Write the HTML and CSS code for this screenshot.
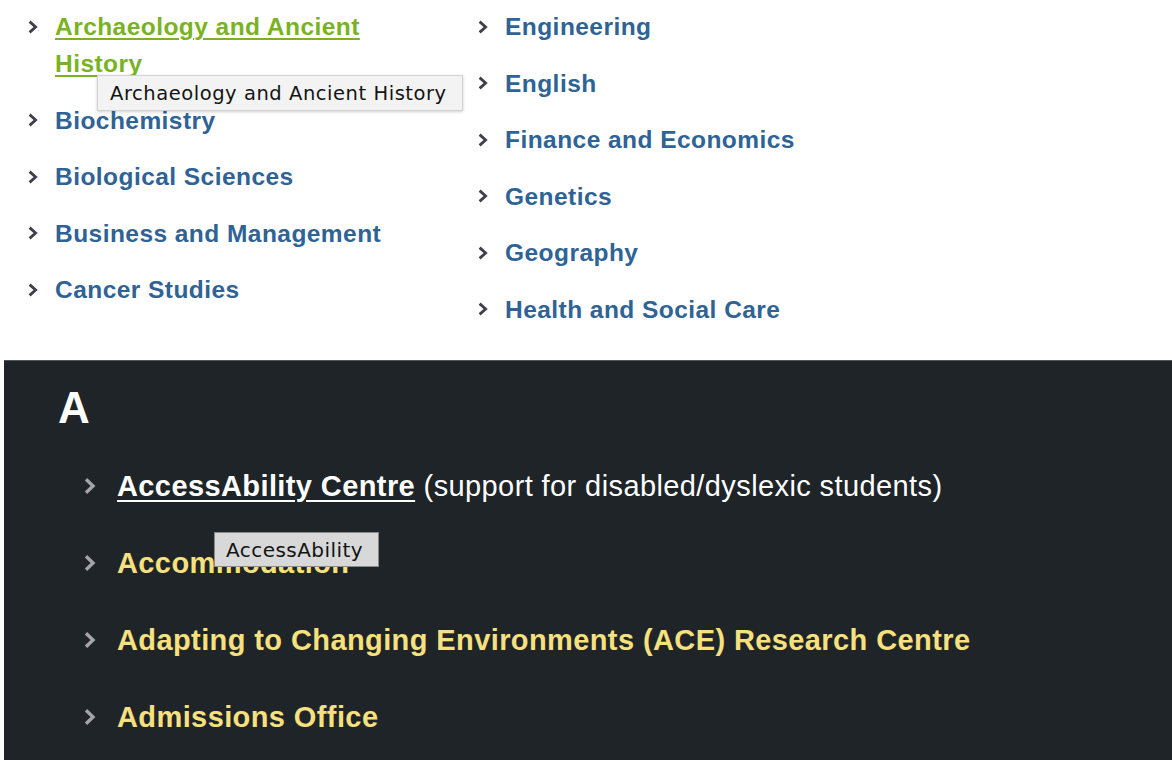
FILE: index.html
```html
<!DOCTYPE html>
<html lang="en">
<head>
<meta charset="utf-8">
<title>Subjects and services</title>
<link rel="stylesheet" href="styles.css">
</head>
<body>
<section class="subjects">
  <ul class="col">
    <li class="item">
      <span class="chev"><svg width="10" height="14" viewBox="0 0 10 14"><path d="M1.6 1.6 L7.6 7 L1.6 12.4" fill="none" stroke="#3f3f4c" stroke-width="2.8"/></svg></span>
      <a class="link link-visited" href="#">Archaeology and Ancient History</a>
    </li>
    <li class="item">
      <span class="chev"><svg width="10" height="14" viewBox="0 0 10 14"><path d="M1.6 1.6 L7.6 7 L1.6 12.4" fill="none" stroke="#3f3f4c" stroke-width="2.8"/></svg></span>
      <a class="link" href="#">Biochemistry</a>
    </li>
    <li class="item">
      <span class="chev"><svg width="10" height="14" viewBox="0 0 10 14"><path d="M1.6 1.6 L7.6 7 L1.6 12.4" fill="none" stroke="#3f3f4c" stroke-width="2.8"/></svg></span>
      <a class="link" href="#">Biological Sciences</a>
    </li>
    <li class="item">
      <span class="chev"><svg width="10" height="14" viewBox="0 0 10 14"><path d="M1.6 1.6 L7.6 7 L1.6 12.4" fill="none" stroke="#3f3f4c" stroke-width="2.8"/></svg></span>
      <a class="link" href="#">Business and Management</a>
    </li>
    <li class="item">
      <span class="chev"><svg width="10" height="14" viewBox="0 0 10 14"><path d="M1.6 1.6 L7.6 7 L1.6 12.4" fill="none" stroke="#3f3f4c" stroke-width="2.8"/></svg></span>
      <a class="link" href="#">Cancer Studies</a>
    </li>
  </ul>
  <ul class="col">
    <li class="item">
      <span class="chev"><svg width="10" height="14" viewBox="0 0 10 14"><path d="M1.6 1.6 L7.6 7 L1.6 12.4" fill="none" stroke="#3f3f4c" stroke-width="2.8"/></svg></span>
      <a class="link" href="#">Engineering</a>
    </li>
    <li class="item">
      <span class="chev"><svg width="10" height="14" viewBox="0 0 10 14"><path d="M1.6 1.6 L7.6 7 L1.6 12.4" fill="none" stroke="#3f3f4c" stroke-width="2.8"/></svg></span>
      <a class="link" href="#">English</a>
    </li>
    <li class="item">
      <span class="chev"><svg width="10" height="14" viewBox="0 0 10 14"><path d="M1.6 1.6 L7.6 7 L1.6 12.4" fill="none" stroke="#3f3f4c" stroke-width="2.8"/></svg></span>
      <a class="link" href="#">Finance and Economics</a>
    </li>
    <li class="item">
      <span class="chev"><svg width="10" height="14" viewBox="0 0 10 14"><path d="M1.6 1.6 L7.6 7 L1.6 12.4" fill="none" stroke="#3f3f4c" stroke-width="2.8"/></svg></span>
      <a class="link" href="#">Genetics</a>
    </li>
    <li class="item">
      <span class="chev"><svg width="10" height="14" viewBox="0 0 10 14"><path d="M1.6 1.6 L7.6 7 L1.6 12.4" fill="none" stroke="#3f3f4c" stroke-width="2.8"/></svg></span>
      <a class="link" href="#">Geography</a>
    </li>
    <li class="item">
      <span class="chev"><svg width="10" height="14" viewBox="0 0 10 14"><path d="M1.6 1.6 L7.6 7 L1.6 12.4" fill="none" stroke="#3f3f4c" stroke-width="2.8"/></svg></span>
      <a class="link" href="#">Health and Social Care</a>
    </li>
  </ul>
  <div class="tooltip tooltip-light">Archaeology and Ancient History</div>
</section>

<section class="az">
  <h2 class="letter">A</h2>
  <ul class="az-list">
    <li class="az-item">
      <span class="az-chev"><svg width="12" height="18" viewBox="0 0 12 18"><path d="M2 2.2 L9 9 L2 15.8" fill="none" stroke="#a3a5a8" stroke-width="3.4"/></svg></span>
      <span><a class="az-link az-link-white" href="#">AccessAbility Centre</a><span class="az-note"> (support for disabled/dyslexic students)</span></span>
    </li>
    <li class="az-item">
      <span class="az-chev"><svg width="12" height="18" viewBox="0 0 12 18"><path d="M2 2.2 L9 9 L2 15.8" fill="none" stroke="#a3a5a8" stroke-width="3.4"/></svg></span>
      <a class="az-link" href="#">Accommodation</a>
    </li>
    <li class="az-item">
      <span class="az-chev"><svg width="12" height="18" viewBox="0 0 12 18"><path d="M2 2.2 L9 9 L2 15.8" fill="none" stroke="#a3a5a8" stroke-width="3.4"/></svg></span>
      <a class="az-link" href="#">Adapting to Changing Environments (ACE) Research Centre</a>
    </li>
    <li class="az-item">
      <span class="az-chev"><svg width="12" height="18" viewBox="0 0 12 18"><path d="M2 2.2 L9 9 L2 15.8" fill="none" stroke="#a3a5a8" stroke-width="3.4"/></svg></span>
      <a class="az-link" href="#">Admissions Office</a>
    </li>
  </ul>
  <div class="tooltip tooltip-grey">AccessAbility</div>
</section>
</body>
</html>
```

FILE: styles.css
```css
* {
  box-sizing: border-box;
}

html, body {
  margin: 0;
  padding: 0;
  background: #ffffff;
}

body {
  width: 1172px;
  height: 760px;
  overflow: hidden;
  position: relative;
  font-family: "Liberation Sans", Arial, Helvetica, sans-serif;
}

ul {
  list-style: none;
  margin: 0;
  padding: 0;
}

/* ---------- subject columns ---------- */
.subjects {
  display: grid;
  grid-template-columns: 390px 1fr;
  column-gap: 60px;
  padding: 8px 0 0 28px;
  height: 360px;
}

.col {
  display: flex;
  flex-direction: column;
  gap: 19.6px;
}

.item {
  display: flex;
  align-items: flex-start;
  gap: 17px;
  font-size: 24.5px;
  font-weight: bold;
  letter-spacing: 0.45px;
  line-height: 37px;
}

.chev {
  display: flex;
  align-items: center;
  height: 37px;
  flex: 0 0 10px;
}

.link {
  color: #2f6395;
  text-decoration: none;
}

.link-visited {
  color: #79b323;
  text-decoration: underline;
  text-decoration-thickness: 2px;
  text-underline-offset: 3px;
}

/* ---------- A–Z section ---------- */
.az {
  margin-left: 4px;
  height: 400px;
  background: #1f2428;
  border-top: 1px solid #50565a;
  padding: 22px 0 0 54px;
}

.letter {
  margin: 0;
  color: #ffffff;
  font-size: 44px;
  line-height: 50px;
  font-weight: bold;
}

.az-list {
  margin: 33px 0 0 26px;
  display: flex;
  flex-direction: column;
  gap: 37px;
}

.az-item {
  display: flex;
  align-items: center;
  gap: 21px;
  font-size: 29px;
  line-height: 40px;
  font-weight: bold;
  letter-spacing: 0.4px;
  color: #f7e07e;
}

.az-chev {
  display: flex;
  align-items: center;
  height: 40px;
  flex: 0 0 12px;
}

.az-link {
  color: #f7e07e;
  text-decoration: none;
}

.az-link-white {
  color: #ffffff;
  text-decoration: underline;
  text-decoration-thickness: 2px;
  text-underline-offset: 4px;
}

.az-note {
  color: #ffffff;
  font-weight: normal;
}

/* ---------- tooltips (overlays) ---------- */
.tooltip {
  position: absolute;
  font-family: "DejaVu Sans", Verdana, sans-serif;
  color: #141414;
  white-space: nowrap;
}

.tooltip-light {
  left: 97px;
  top: 75px;
  width: 366px;
  height: 36px;
  padding: 6px 0 0 12px;
  font-size: 19.5px;
  letter-spacing: 0.55px;
  line-height: 24px;
  background: #f3f3f3;
  border: 1px solid #d2d2d2;
  box-shadow: 0 1px 3px rgba(0, 0, 0, 0.18);
}

.tooltip-grey {
  left: 214px;
  top: 532px;
  width: 165px;
  height: 35px;
  padding: 5px 0 0 11px;
  font-size: 20px;
  letter-spacing: 0.45px;
  line-height: 24px;
  background: #d8d8d8;
  border: 1px solid #8a8a8a;
}
```
